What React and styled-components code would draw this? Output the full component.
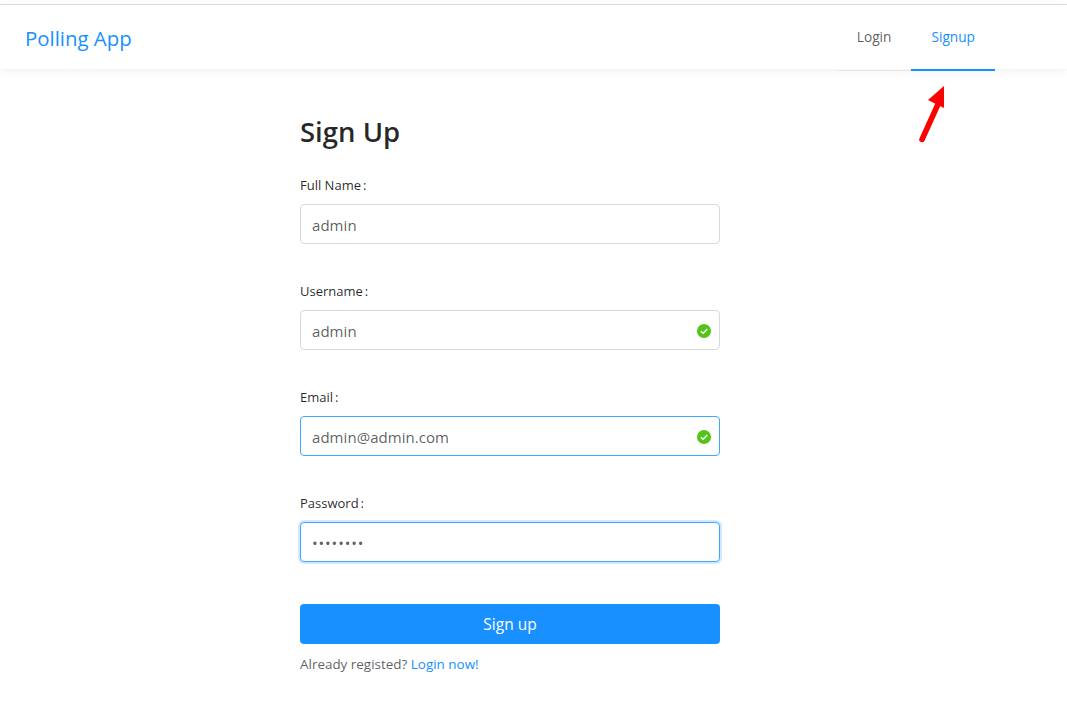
import React from 'react'
import styled, { createGlobalStyle } from 'styled-components'

const GlobalStyle = createGlobalStyle`
  html, body {
    margin: 0;
    padding: 0;
    background: #fff;
  }
  body {
    font-family: "Open Sans", "Noto Sans", "Liberation Sans", sans-serif;
    color: rgba(0, 0, 0, 0.65);
  }
  * {
    box-sizing: border-box;
  }
`

const Page = styled.div`
  position: relative;
  width: 100%;
  height: 710px;
  overflow: hidden;
  padding-top: 4px;
`

const Header = styled.header`
  height: 65px;
  display: flex;
  justify-content: space-between;
  border-top: 1px solid #dcdcdc;
  box-shadow: 0 2px 8px rgba(0, 0, 0, 0.06);
  padding: 0 72px 0 25px;
  background: #fff;
`

const Logo = styled.a`
  font-size: 20.4px;
  line-height: 66px;
  color: #1890ff;
  text-decoration: none;
`

const Menu = styled.nav`
  display: flex;
  align-items: flex-start;
`

const MenuItem = styled.a`
  display: flex;
  align-items: center;
  height: 66px;
  padding: 0 20px 2px;
  font-size: 13.7px;
  color: ${(p) => (p.$active ? '#1890ff' : 'rgba(0, 0, 0, 0.65)')};
  border-bottom: ${(p) => (p.$active ? '2px solid #1890ff' : '1px solid #e8e8e8')};
`

const Main = styled.main`
  width: 420px;
  margin-left: 300px;
`

const Title = styled.h1`
  margin: 45px 0 0;
  font-size: 27.5px;
  line-height: 36px;
  font-weight: 600;
  color: rgba(0, 0, 0, 0.85);
`

const Form = styled.form`
  display: flex;
  flex-direction: column;
  margin-top: 20px;
`

const Field = styled.div`
  height: 106px;
`

const Label = styled.label`
  display: block;
  height: 34px;
  font-size: 13px;
  line-height: 30px;
  color: rgba(0, 0, 0, 0.85);
`

const Colon = styled.span`
  margin-left: 2px;
`

const InputWrap = styled.div`
  position: relative;
  height: 40px;
`

const Input = styled.input`
  display: block;
  width: 100%;
  height: 40px;
  padding: 2px 11px 0;
  font-family: inherit;
  font-size: 15px;
  letter-spacing: ${(p) => (p.type === 'password' ? '0.9px' : '0.05px')};
  color: rgba(0, 0, 0, 0.65);
  background: #fff;
  outline: none;
  border-radius: 4px;
  border: 1px solid ${(p) => (p.$state === 'idle' ? '#d9d9d9' : '#40a9ff')};
  box-shadow: ${(p) => (p.$state === 'focus' ? '0 0 0 2px rgba(24, 144, 255, 0.2)' : 'none')};
`

const Valid = styled.svg`
  position: absolute;
  top: 14px;
  right: 9px;
  width: 14px;
  height: 14px;
`

const Submit = styled.button`
  display: block;
  width: 100%;
  height: 40px;
  margin-top: 10px;
  border: 0;
  border-radius: 4px;
  background: #1890ff;
  color: #fff;
  font-family: inherit;
  font-size: 15.5px;
  cursor: pointer;
`

const Footer = styled.p`
  margin: 10px 0 0;
  font-size: 13.45px;
  line-height: 20px;
  color: rgba(0, 0, 0, 0.65);
`

const FooterLink = styled.a`
  color: #1890ff;
`

const Arrow = styled.svg`
  position: absolute;
  left: 915px;
  top: 84px;
  width: 34px;
  height: 62px;
`

const Check = () => (
  <Valid viewBox="0 0 14 14">
    <circle cx="7" cy="7" r="7" fill="#52c41a" />
    <path d="M3.8 7.2 L6.1 9.3 L10.3 5" fill="none" stroke="#fff" strokeWidth="1.5" />
  </Valid>
)

const fields = [
  { label: 'Full Name', value: 'admin', state: 'idle' },
  { label: 'Username', value: 'admin', state: 'idle', valid: true },
  { label: 'Email', value: 'admin@admin.com', state: 'hover', valid: true },
  { label: 'Password', value: 'password', state: 'focus', type: 'password' },
]

const App = () => {
  return (
    <Page>
      <GlobalStyle />
      <Header>
        <Logo>Polling App</Logo>
        <Menu>
          <MenuItem>Login</MenuItem>
          <MenuItem $active>Signup</MenuItem>
        </Menu>
      </Header>
      <Main>
        <Title>Sign Up</Title>
        <Form>
          {fields.map((f) => (
            <Field key={f.label}>
              <Label>{f.label}<Colon>:</Colon></Label>
              <InputWrap>
                <Input readOnly type={f.type || 'text'} value={f.value} $state={f.state} />
                {f.valid && <Check />}
              </InputWrap>
            </Field>
          ))}
          <Submit type="button">Sign up</Submit>
        </Form>
        <Footer>
          Already registed? <FooterLink>Login now!</FooterLink>
        </Footer>
      </Main>
      <Arrow viewBox="0 0 34 62">
        <path d="M7 55.5 L24 18" stroke="#ff0000" strokeWidth="5.5" strokeLinecap="round" fill="none" />
        <path d="M13 16 L29 2 L29 24 Z" fill="#ff0000" />
      </Arrow>
    </Page>
  )
}

export default App
